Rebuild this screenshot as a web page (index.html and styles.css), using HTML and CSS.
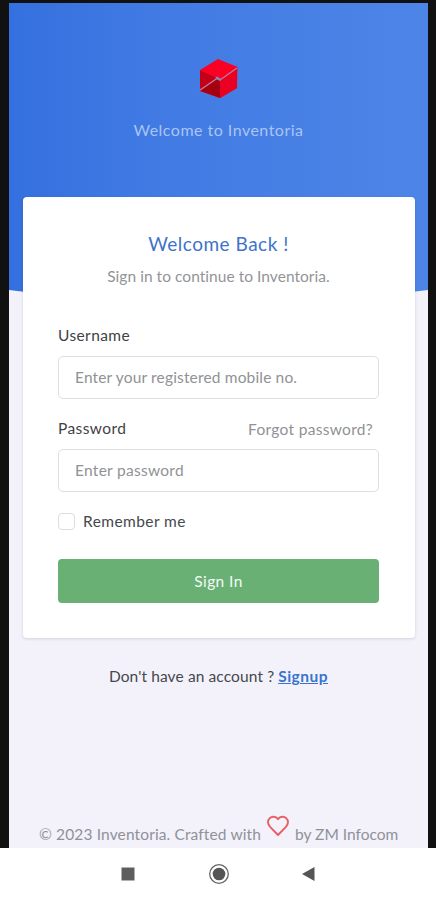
FILE: index.html
```html
<!DOCTYPE html>
<html lang="en">
<head>
<meta charset="utf-8">
<title>Inventoria – Sign In</title>
<link rel="stylesheet" href="styles.css">
</head>
<body>
<div class="device">
  <main class="screen">
    <header class="hero">
      <svg class="logo" width="40" height="42" viewBox="0 0 40 42" aria-hidden="true">
        <path fill="#fb0024" d="M19 1 38.500 9 38 30 21 40 1 33 1 12Z"/>
        <path fill="#e90022" d="M21 22 38 11 38 30 21 40Z"/>
        <path fill="#c2001a" d="M1 12.500 18 20 1 32Z"/>
        <path fill="#a50010" d="M1.500 33 18 21 21 22 21 40Z"/>
        <path fill="none" stroke="#b77f9b" stroke-width="1.100" d="M1 32 18 20.500 21 22 38 10"/>
        <path fill="#7791bd" d="M16 20 18 18.500 22 21 21 23Z"/>
      </svg>
      <p class="tagline">Welcome to Inventoria</p>
    </header>
    <section class="card">
      <h1 class="title">Welcome Back !</h1>
      <p class="subtitle">Sign in to continue to Inventoria.</p>
      <form class="form">
        <label class="label user-label" for="user">Username</label>
        <input class="field user-field" id="user" type="text" placeholder="Enter your registered mobile no.">
        <div class="label-row">
          <label class="label pass-label" for="pass">Password</label>
          <a class="forgot">Forgot password?</a>
        </div>
        <input class="field pass-field" id="pass" type="password" placeholder="Enter password">
        <label class="remember"><input class="check" type="checkbox"><span>Remember me</span></label>
        <button class="submit" type="button">Sign In</button>
      </form>
    </section>
    <p class="register"><span class="question">Don't have an account ?</span><a class="signup">Signup</a></p>
    <footer class="footer">
      <span class="credit">© 2023 Inventoria. Crafted with</span>
      <svg class="heart" width="24" height="24" viewBox="0 0 24 24" aria-hidden="true">
        <path fill="none" stroke="#e85f66" stroke-width="1.9" stroke-linejoin="round" d="M12 21 4.3 13.2C1.400 10.200 1.300 6.400 3.700 4.200 6.100 2 9.700 2.300 12 5.200 14.300 2.300 17.900 2 20.300 4.200 22.700 6.400 22.600 10.200 19.700 13.200Z"/>
      </svg>
      <span class="author">by ZM Infocom</span>
    </footer>
  </main>
</div>
<nav class="navbar">
  <svg width="22" height="22" viewBox="0 0 22 22"><path fill="#5e5e5e" d="M4.500 4.500h13v13h-13z"/></svg>
  <svg width="22" height="22" viewBox="0 0 22 22"><circle cx="11" cy="11" r="9.300" fill="none" stroke="#666" stroke-width="1.300"/><circle cx="11" cy="11" r="6.300" fill="#555"/></svg>
  <svg width="22" height="22" viewBox="0 0 22 22"><path fill="#555" d="M3 11 15.500 4v14z"/></svg>
</nav>
</body>
</html>
```
FILE: styles.css
```css
* { box-sizing: border-box; }
body {
  margin: 0;
  height: 900px;
  overflow: hidden;
  background: #fff;
  color: #45484d;
  font: 15.5px/20px Lato, "Open Sans", sans-serif;
}
h1, p { margin: 0; font-weight: 400; }
.device { height: 848px; padding: 3px 8px 0 9px; background: #111; }
.screen { height: 845px; background: #f3f2fb; display: flex; flex-direction: column; }
.hero {
  flex: none;
  height: 291px;
  padding-top: 55px;
  margin-bottom: -97px;
  background: linear-gradient(90deg, #3470df, #417ae3 35%, #4d85e7);
  clip-path: polygon(0 0, 100% 0, 100% 287px, 96% 289px, 50% 291px, 4% 289px, 0 287px);
  display: flex;
  flex-direction: column;
  align-items: center;
}
.logo { display: block; }
.tagline { margin-top: 20px; color: #a8c5f5; font-size: 16px; letter-spacing: .48px; white-space: nowrap; }
.card {
  position: relative;
  flex: none;
  height: 441px;
  margin: 0 13px 0 14px;
  padding: 35px 36px 0 35px;
  background: #fff;
  border-radius: 4px;
  box-shadow: 0 1px 3px rgba(50, 50, 80, .17);
}
.title { font-size: 19px; line-height: 24px; letter-spacing: .5px; color: #3e73c9; text-align: center; }
.subtitle { margin-top: 10px; height: 20px; letter-spacing: .04px; color: #929497; text-align: center; white-space: nowrap; }
.form { display: flex; flex-direction: column; margin-top: 39px; }
.label { color: #3f4144; letter-spacing: .4px; }
.field {
  width: 100%;
  height: 43px;
  padding: 0 16px 2px;
  border: 1px solid #dedfe2;
  border-radius: 5px;
  background: #fff;
  font: inherit;
  letter-spacing: .16px;
  outline: 0;
}
.pass-field { letter-spacing: .28px; }
.field::placeholder { color: #909295; opacity: 1; }
.user-label { height: 20px; margin-bottom: 11px; }
.label-row { display: flex; justify-content: space-between; margin: 19px 6px 11px 0; height: 20px; }
.forgot { color: #909295; letter-spacing: .3px; padding-top: 1px; }
.remember { display: flex; gap: 8px; align-items: center; margin-top: 19px; height: 20px; letter-spacing: .42px; }
.check { appearance: none; margin: 0; width: 17px; height: 17px; border: 1px solid #dcdde1; border-radius: 4px; background: #fff; }
.submit { margin-top: 28px; height: 44px; border: 0; border-radius: 4px; background: #69b074; color: #f3fbf4; font: inherit; letter-spacing: .4px; }
.register { display: flex; justify-content: center; gap: 4px; margin-top: 28px; white-space: nowrap; }
.question { letter-spacing: .11px; }
.signup { color: #3974cf; font-weight: 700; letter-spacing: .5px; text-decoration: underline; }
.footer { display: flex; align-items: flex-end; margin-top: auto; height: 37px; padding: 0 30px 4px; color: #8f9199; white-space: nowrap; }
.credit { letter-spacing: .13px; }
.heart { margin: 0 5px 6px; flex: none; }
.navbar { height: 52px; display: flex; justify-content: center; align-items: center; gap: 69px; padding-left: 1px; }
```
